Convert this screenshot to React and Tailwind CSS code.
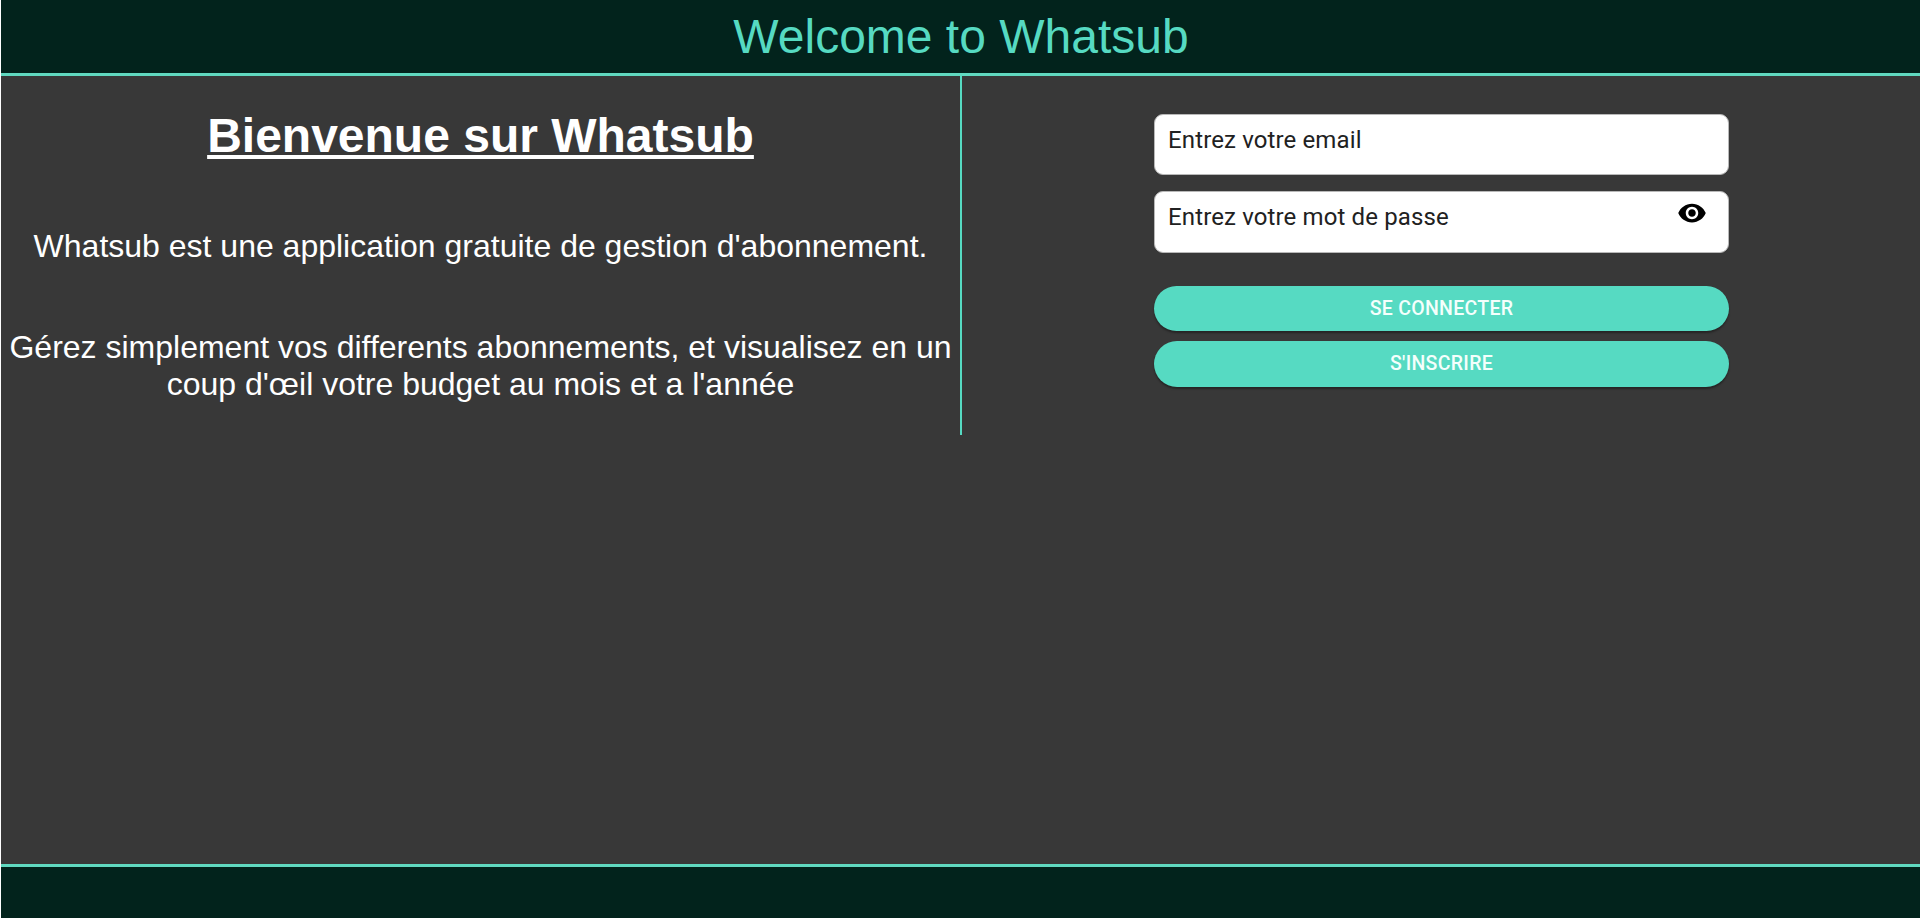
import React from "react";

function Field({ label, children, className }) {
  return (
    <div
      className={`flex w-[575px] justify-between rounded-[9px] border border-[#b8b8b8] bg-white pl-[13px] pr-[21px] ${className}`}
    >
      <span className="pt-[11px] font-[Roboto,sans-serif] text-[24px] leading-[28px] tracking-[0.13px] text-[#212121]">
        {label}
      </span>
      {children}
    </div>
  );
}

function PillButton({ children, className }) {
  return (
    <button
      className={`flex w-[575px] items-start justify-center rounded-full bg-[#56dac2] pt-[12px] font-[Roboto,sans-serif] text-[19.5px] font-medium leading-[22px] tracking-[0.3px] text-[#f4fffc] shadow-[0_2px_2px_rgba(0,0,0,0.35)] ${className}`}
    >
      {children}
    </button>
  );
}

export default function App() {
  return (
    <div className="flex h-[918px] w-[1920px] flex-col overflow-hidden border-l border-white bg-[#383838] font-['Liberation_Sans',Arial,sans-serif]">
      <header className="h-[76px] shrink-0 border-b-3 border-[#60d9c0] bg-[#02231c] pl-px pt-[9px] text-center text-[48px] leading-[55px] text-[#56dac2]">
        Welcome to Whatsub
      </header>
      <main className="flex grow items-start">
        <section className="h-[359px] w-[961px] shrink-0 border-r-2 border-[#56dac2] pt-[32px] text-center text-white">
          <h1 className="text-[48px] font-bold leading-[55px] underline">Bienvenue sur Whatsub</h1>
          <p className="mt-[65px] text-[32px] leading-[37px]">
            Whatsub est une application gratuite de gestion d'abonnement.
          </p>
          <p className="mt-[64px] text-[32px] leading-[37px]">
            Gérez simplement vos differents abonnements, et visualisez en un
            <br />
            coup d'œil votre budget au mois et a l'année
          </p>
        </section>
        <section className="flex grow flex-col items-start pl-[192px] pt-[38px]">
          <Field label="Entrez votre email" className="h-[61px]" />
          <Field label="Entrez votre mot de passe" className="mt-[16px] h-[62px]">
            <svg viewBox="0 0 24 24" className="mt-[6px] h-[30px] w-[30px] fill-black">
              <path d="M12 4.5C7 4.5 2.73 7.61 1 12c1.73 4.39 6 7.5 11 7.5s9.27-3.11 11-7.5c-1.73-4.39-6-7.5-11-7.5zM12 17c-2.76 0-5-2.24-5-5s2.24-5 5-5 5 2.24 5 5-2.24 5-5 5zm0-8c-1.66 0-3 1.34-3 3s1.34 3 3 3 3-1.34 3-3-1.34-3-3-3z" />
            </svg>
          </Field>
          <PillButton className="mt-[33px] h-[45px]">SE CONNECTER</PillButton>
          <PillButton className="mt-[10px] h-[46px]">S'INSCRIRE</PillButton>
        </section>
      </main>
      <footer className="h-[54px] shrink-0 border-t-3 border-[#60d9c0] bg-[#02231c]" />
    </div>
  );
}
